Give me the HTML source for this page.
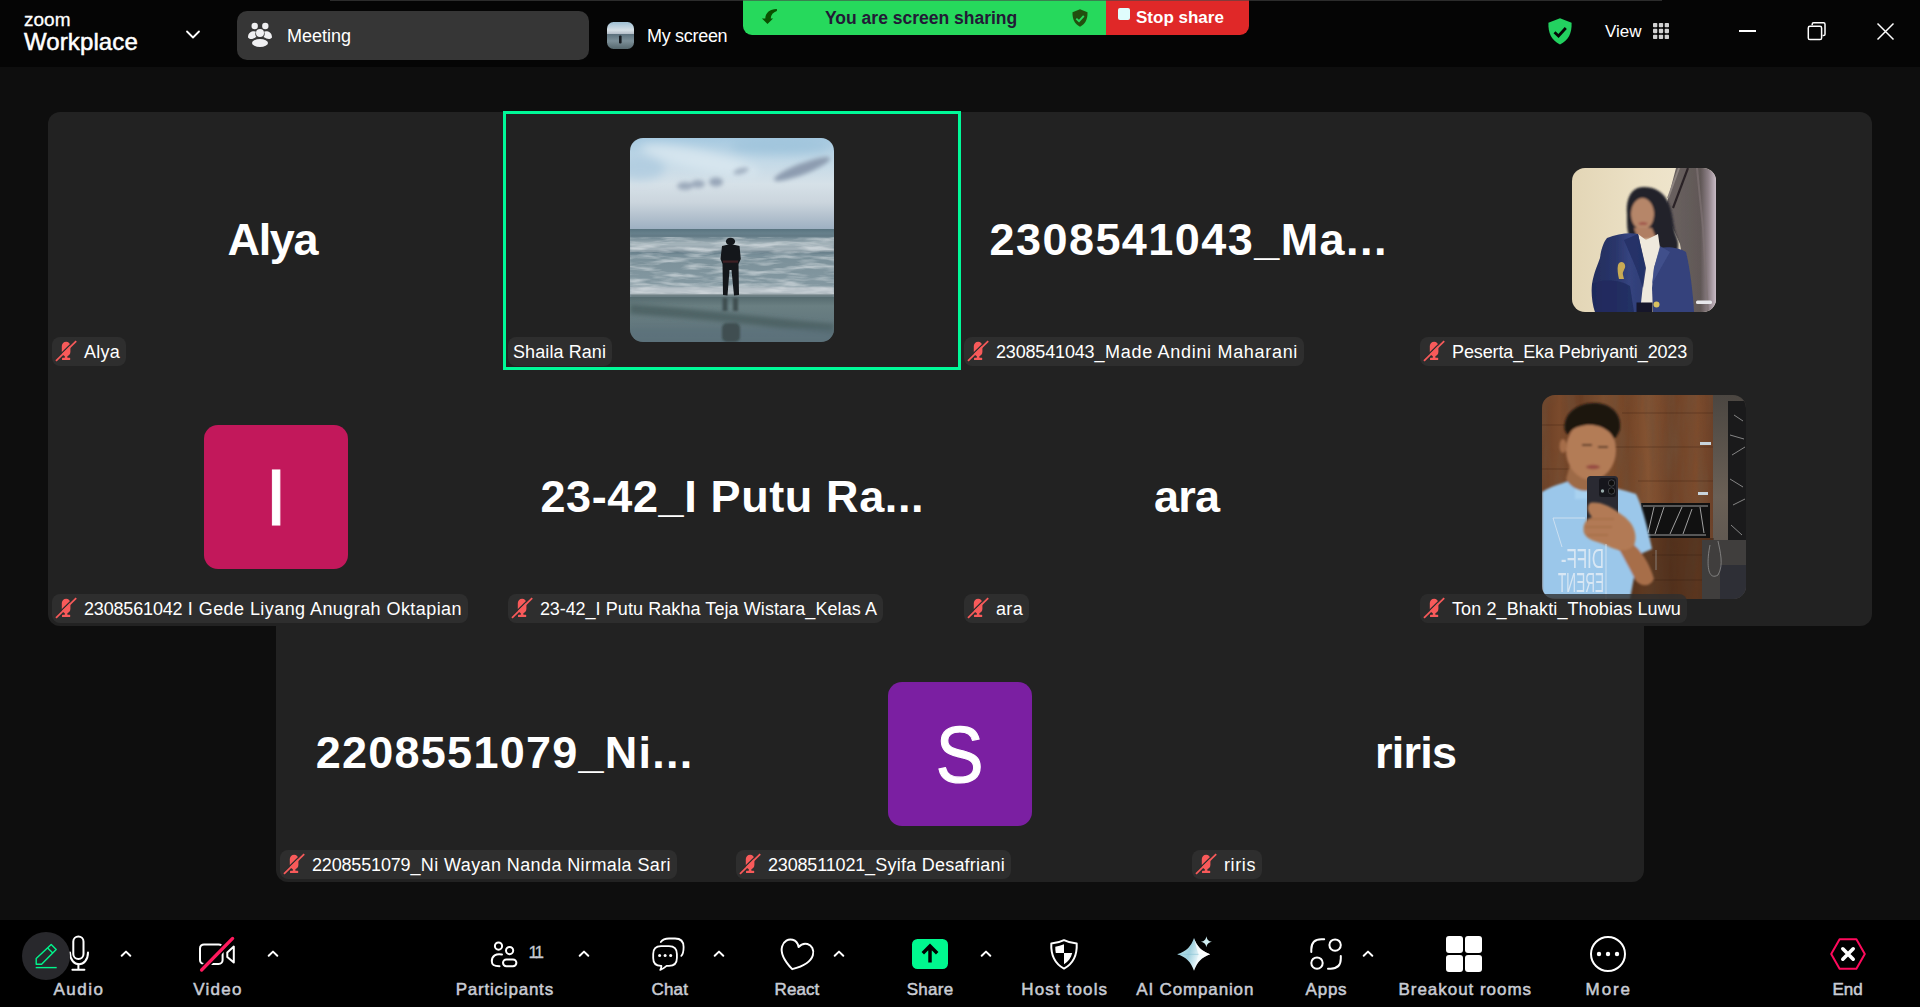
<!DOCTYPE html>
<html><head><meta charset="utf-8"><title>Zoom Meeting</title>
<style>
*{box-sizing:border-box;margin:0;padding:0}
html,body{width:1920px;height:1008px;overflow:hidden;background:#0e0e0e;font-family:"Liberation Sans",sans-serif;color:#fff}
.abs{position:absolute}
svg{position:absolute;overflow:visible}
#top{position:absolute;left:0;top:0;width:1920px;height:67px;background:#050505}
#topline{position:absolute;left:330px;top:0;width:1332px;height:1px;background:#2a2a2a}
#grid{position:absolute;left:48px;top:112px;width:1824px;height:514px;background:#222;border-radius:12px 12px 12px 12px}
#grid2{position:absolute;left:276px;top:626px;width:1368px;height:256px;background:#222;border-radius:0 0 12px 12px}
#active{position:absolute;left:503px;top:111px;width:458px;height:259px;border:3px solid #00f998}
#bar{position:absolute;left:0;top:920px;width:1920px;height:87px;background:#000}
#bline{position:absolute;left:0;top:1007px;width:1920px;height:1px;background:#fff}
.t{position:absolute;white-space:nowrap;line-height:1}
.big{position:absolute;font-weight:bold;font-size:45px;line-height:52px;height:52px;white-space:nowrap;color:#fff;text-align:center;width:456px}
.lab{position:absolute;height:29px;border-radius:8px;background:#2e2e2e;color:#fff;font-size:18px;line-height:31px;white-space:nowrap;padding:0 6px 0 32px}
.lab.nm{padding-left:5px}
.lab svg{left:3px;top:3px}
.tb{position:absolute;top:980px;font-size:17px;line-height:20px;color:#c9ccd4;white-space:nowrap;transform:translateX(-50%);-webkit-text-stroke:0.5px #c9ccd4}
.ini{position:absolute;width:144px;height:144px;border-radius:14px;text-align:center;font-size:80px;line-height:145px;color:#fff}
</style></head><body>
<div id="top"></div>
<div class="t" style="left:24px;top:9px;font-size:19px;line-height:22px;-webkit-text-stroke:0.3px #fff">zoom</div>
<div class="t" style="left:24px;top:28px;font-size:24px;line-height:28px;-webkit-text-stroke:0.5px #fff;letter-spacing:0.1px">Workplace</div>
<svg style="left:185px;top:29px" width="16" height="11" viewBox="0 0 16 11"><path d="M2 2.5 L8 8.5 L14 2.5" fill="none" stroke="#fff" stroke-width="1.8" stroke-linecap="round" stroke-linejoin="round"/></svg>
<div class="abs" style="left:237px;top:11px;width:352px;height:49px;background:#363636;border-radius:10px"></div>
<svg style="left:248px;top:22px" width="24" height="26" viewBox="0 0 24 26"><g fill="#f0f0f2"><circle cx="6.7" cy="4" r="3.2"/><circle cx="17.3" cy="4" r="3.2"/><path d="M0 15.5 C0 11 3 9.3 6 9.3 C7 9.3 7.6 9.5 8 9.8 C7 11 7 13.5 8.5 15 C5 16.5 3 18.5 0 15.5Z"/><path d="M24 15.5 C24 11 21 9.3 18 9.3 C17 9.3 16.4 9.5 16 9.8 C17 11 17 13.5 15.5 15 C19 16.5 21 18.5 24 15.5Z"/><circle cx="12" cy="11" r="4"/><ellipse cx="12" cy="21" rx="8" ry="4"/></g></svg>
<div class="t" style="left:287px;top:26px;font-size:18px;line-height:20px">Meeting</div>
<svg style="left:607px;top:22px" width="27" height="27" viewBox="0 0 27 27"><defs><clipPath id="ms"><rect width="27" height="27" rx="6.5"/></clipPath><linearGradient id="msg" x1="0" y1="0" x2="0" y2="1"><stop offset="0" stop-color="#9fc0d4"/><stop offset="0.3" stop-color="#d6e0e6"/><stop offset="0.44" stop-color="#b4bec8"/><stop offset="0.46" stop-color="#5d727e"/><stop offset="0.7" stop-color="#7c8f98"/><stop offset="1" stop-color="#56686e"/></linearGradient></defs><g clip-path="url(#ms)"><rect width="27" height="27" fill="url(#msg)"/><rect x="12" y="13.5" width="2.6" height="8" rx="1" fill="#151a1f"/></g></svg>
<div class="t" style="left:647px;top:26px;font-size:18px;line-height:20px;letter-spacing:-0.3px">My screen</div>
<div class="abs" style="left:743px;top:0px;width:363px;height:35px;background:#26d95c;border-radius:0 0 0 9px"></div>
<div class="abs" style="left:1106px;top:0px;width:143px;height:35px;background:#e02828;border-radius:0 0 9px 0"></div>
<svg style="left:761px;top:8px" width="17" height="17" viewBox="0 0 17 17"><path d="M15.900 1.100 C9.300 0.900 4.500 4.600 4.300 10.400 L0.900 10.400 L6.500 16.100 L12.100 10.400 L9.700 10.400 C9.900 7 12.200 4.300 15.900 3.100 Z" fill="#0a5000"/></svg>
<div class="t" style="left:825px;top:8px;font-size:17.5px;line-height:20px;font-weight:bold;color:#221a36">You are screen sharing</div>
<svg style="left:1072px;top:9px" width="16" height="18" viewBox="0 0 16 18"><path d="M8 0.3 L15.5 3.3 C15.7 10 13.5 15 8 17.8 C2.5 15 0.3 10 0.5 3.3Z" fill="#22500f"/><path d="M4.3 9.6 L7 12.2 L11.8 6.8" fill="none" stroke="#26d95c" stroke-width="1.9"/></svg>
<div class="abs" style="left:1118px;top:8px;width:12px;height:12px;background:#dffcfc;border-radius:2px"></div>
<div class="t" style="left:1136px;top:8px;font-size:17px;line-height:20px;font-weight:bold;color:#fff">Stop share</div>
<svg style="left:1548px;top:18px" width="24" height="27" viewBox="0 0 24 27"><path d="M12 0.2 L23.6 4.8 C24 15 20.5 22.5 12 26.6 C3.5 22.5 0 15 0.4 4.8Z" fill="#23d160"/><path d="M6.5 14.2 L10.5 18 L17.8 10" fill="none" stroke="#050505" stroke-width="2.8"/></svg>
<div class="t" style="left:1605px;top:22px;font-size:17px;line-height:20px">View</div>
<svg style="left:1653px;top:23px" width="16" height="16" viewBox="0 0 16 16"><g fill="#d2d2d2"><rect x="0" y="0" width="4.3" height="4.3" rx="0.8"/><rect x="5.85" y="0" width="4.3" height="4.3" rx="0.8"/><rect x="11.7" y="0" width="4.3" height="4.3" rx="0.8"/><rect x="0" y="5.85" width="4.3" height="4.3" rx="0.8"/><rect x="5.85" y="5.85" width="4.3" height="4.3" rx="0.8"/><rect x="11.7" y="5.85" width="4.3" height="4.3" rx="0.8"/><rect x="0" y="11.7" width="4.3" height="4.3" rx="0.8"/><rect x="5.85" y="11.7" width="4.3" height="4.3" rx="0.8"/><rect x="11.7" y="11.7" width="4.3" height="4.3" rx="0.8"/></g></svg>
<div class="abs" style="left:1739px;top:30.200px;width:17px;height:1.600px;background:#fff"></div>
<svg style="left:1806px;top:21px" width="21" height="21" viewBox="0 0 21 21"><g fill="none" stroke="#fff" stroke-width="1.5"><path d="M6.2 4.2 V3.2 Q6.2 1.8 7.6 1.8 H17.6 Q19 1.8 19 3.2 V13.2 Q19 14.6 17.6 14.6 H16.6"/><rect x="2.3" y="5.3" width="13.3" height="13.3" rx="1.6"/></g></svg>
<svg style="left:1877px;top:23px" width="17" height="17" viewBox="0 0 17 17"><path d="M0.5 0.5 L16.5 16.5 M16.5 0.5 L0.5 16.5" stroke="#fff" stroke-width="1.5" fill="none"/></svg>
<div class="abs" style="left:330px;top:0;width:1332px;height:1px;background:rgba(70,70,70,.6)"></div>

<div id="grid"></div>
<div id="grid2"></div>
<div id="active"></div>
<div class="big" style="left:45px;top:214px;letter-spacing:-1.4px;text-indent:-1.4px;">Alya</div>
<div class="lab" style="left:52px;top:337px;letter-spacing:0.25px;"><svg width="28" height="29" viewBox="0 0 28 29" style="left:0;top:0"><g fill="#f85a5a"><rect x="9.8" y="4.8" width="8.6" height="14.4" rx="4.3"/><rect x="12.8" y="18.8" width="2.6" height="2.4"/><rect x="10" y="20.8" width="8.2" height="2.3" rx="0.6"/></g><path d="M2.9 22.7 L23.1 2.9" stroke="#2e2e2e" stroke-width="1.4" fill="none"/><path d="M4 23.9 L24.2 4.1" stroke="#f85a5a" stroke-width="1.7" fill="none"/></svg>Alya</div>
<svg style="left:630px;top:138px" width="204" height="204" viewBox="0 0 204 204">
<defs>
<clipPath id="p1c"><rect width="204" height="204" rx="13"/></clipPath>
<linearGradient id="p1sky" x1="0" y1="0" x2="0" y2="1"><stop offset="0" stop-color="#a6c9e0"/><stop offset="0.25" stop-color="#c3d9e7"/><stop offset="0.5" stop-color="#d6e1e8"/><stop offset="0.7" stop-color="#cbd5dd"/><stop offset="0.86" stop-color="#b2c0cd"/><stop offset="1" stop-color="#9cafc1"/></linearGradient>
<linearGradient id="p1sea" x1="0" y1="0" x2="0" y2="1"><stop offset="0" stop-color="#58737f"/><stop offset="0.1" stop-color="#6f8892"/><stop offset="0.2" stop-color="#8ea0a8"/><stop offset="0.26" stop-color="#7d919a"/><stop offset="0.34" stop-color="#788e98"/><stop offset="0.5" stop-color="#7d929b"/><stop offset="1" stop-color="#879ba4"/></linearGradient>
<linearGradient id="p1sand" x1="0" y1="0" x2="0" y2="1"><stop offset="0" stop-color="#566b6f"/><stop offset="0.2" stop-color="#6a7f82"/><stop offset="1" stop-color="#5c717a"/></linearGradient>
<filter id="b2" x="-20%" y="-20%" width="140%" height="140%"><feGaussianBlur stdDeviation="2"/></filter>
<filter id="b1" x="-20%" y="-20%" width="140%" height="140%"><feGaussianBlur stdDeviation="0.9"/></filter>
<filter id="b4" x="-30%" y="-30%" width="160%" height="160%"><feGaussianBlur stdDeviation="5"/></filter>
<filter id="foam" x="0" y="0" width="100%" height="100%"><feTurbulence type="fractalNoise" baseFrequency="0.035 0.22" numOctaves="3" seed="7" result="n"/><feColorMatrix in="n" type="matrix" values="0 0 0 0 0.86  0 0 0 0 0.89  0 0 0 0 0.91  2.600 0 0 0 -1.050"/></filter>
</defs>
<g clip-path="url(#p1c)">
<rect width="204" height="92" fill="url(#p1sky)"/>
<g filter="url(#b4)"><ellipse cx="70" cy="22" rx="60" ry="10" fill="#dbe8f0" opacity=".8" transform="rotate(12 70 22)"/><ellipse cx="150" cy="8" rx="50" ry="8" fill="#9dc3db" opacity=".8"/><ellipse cx="10" cy="30" rx="25" ry="12" fill="#a9c9de" opacity=".7"/></g>
<g filter="url(#b2)" fill="#8d9cb0"><ellipse cx="172" cy="31" rx="30" ry="5.500" transform="rotate(-21 172 31)"/><ellipse cx="55" cy="48" rx="8" ry="4" opacity=".8"/><ellipse cx="68" cy="46" rx="7" ry="4" opacity=".8"/><ellipse cx="86" cy="44" rx="7" ry="4.500" opacity=".85"/><ellipse cx="111" cy="33" rx="8" ry="3" transform="rotate(-15 111 33)" opacity=".7"/></g>
<rect y="91" width="204" height="68" fill="url(#p1sea)"/>
<g filter="url(#b1)"><rect y="97" width="204" height="2" fill="#516a76" opacity=".7"/><rect y="104.500" width="204" height="4" fill="#aebbc2" opacity=".8"/><rect y="113" width="204" height="2.200" fill="#55707c" opacity=".85"/><rect y="109.500" width="204" height="3" fill="#c0cad0" opacity=".7"/><rect y="149" width="204" height="7.500" fill="#b9c3c9"/><rect y="156.500" width="204" height="2.500" fill="#56696d"/></g>
<rect y="99" width="204" height="57" filter="url(#foam)" opacity=".5"/>
<rect y="159" width="204" height="45" fill="url(#p1sand)"/>
<g filter="url(#b2)"><path d="M0 166 C60 170 120 178 204 186 L204 196 C120 186 60 180 0 176 Z" fill="#4b5f60" opacity=".85"/><rect y="190" width="204" height="14" fill="#5a6f79" opacity=".6"/></g>
<g fill="#14171b"><ellipse cx="100.500" cy="103.500" rx="4.600" ry="3.800"/><path d="M92 108 Q100.500 105 109.500 108 L110.800 121 L108.500 126 L109 157 L104 157.500 L101.500 132 L99.500 132 L97.500 157.500 L93 157 L92.500 126 L90.500 121 Z"/></g>
<rect x="93" y="122.500" width="15" height="2.200" fill="#3e2024"/>
<g filter="url(#b1)" fill="#3c4c4e" opacity=".9"><rect x="92.500" y="160" width="5" height="13"/><rect x="103" y="160" width="5" height="13"/><rect x="92" y="185" width="18" height="19" rx="5"/></g>
</g></svg>

<div class="lab nm" style="left:508px;top:337px;letter-spacing:0.09px;">Shaila Rani</div>
<div class="big" style="left:960px;top:214px;letter-spacing:1.44px;text-indent:1.44px;">2308541043_Ma...</div>
<div class="lab" style="left:964px;top:337px;letter-spacing:0.689px;"><svg width="28" height="29" viewBox="0 0 28 29" style="left:0;top:0"><g fill="#f85a5a"><rect x="9.8" y="4.8" width="8.6" height="14.4" rx="4.3"/><rect x="12.8" y="18.8" width="2.6" height="2.4"/><rect x="10" y="20.8" width="8.2" height="2.3" rx="0.6"/></g><path d="M2.9 22.7 L23.1 2.9" stroke="#2e2e2e" stroke-width="1.4" fill="none"/><path d="M4 23.9 L24.2 4.1" stroke="#f85a5a" stroke-width="1.7" fill="none"/></svg><span style="letter-spacing:-0.17px">2308541043</span>_Made Andini Maharani</div>
<svg style="left:1572px;top:168px" width="144" height="144" viewBox="0 0 144 144">
<defs><clipPath id="p2c"><rect width="144" height="144" rx="13"/></clipPath>
<linearGradient id="p2w" x1="0" y1="0" x2="1" y2="0"><stop offset="0" stop-color="#e3d6b6"/><stop offset="0.5" stop-color="#ece1c6"/><stop offset="1" stop-color="#f1e8d2"/></linearGradient>
<linearGradient id="p2j" x1="0" y1="0" x2="1" y2="0"><stop offset="0" stop-color="#222c5c"/><stop offset="0.45" stop-color="#2a366b"/><stop offset="0.7" stop-color="#35447f"/><stop offset="1" stop-color="#2f3d75"/></linearGradient>
<linearGradient id="p2d" x1="0" y1="0" x2="1" y2="0"><stop offset="0" stop-color="#6a6260"/><stop offset="0.7" stop-color="#615857"/><stop offset="0.85" stop-color="#8d8086"/><stop offset="1" stop-color="#c9bbc6"/></linearGradient>
<filter id="p2b" x="-20%" y="-20%" width="140%" height="140%"><feGaussianBlur stdDeviation="1.300"/></filter>
<filter id="p2b2" x="-20%" y="-20%" width="140%" height="140%"><feGaussianBlur stdDeviation="0.700"/></filter></defs>
<g clip-path="url(#p2c)">
<rect width="144" height="144" fill="url(#p2w)"/>
<g filter="url(#p2b2)">
<path d="M104 0 H144 V144 H119 L108 76 L93 42 Z" fill="url(#p2d)"/>
<path d="M116 0 L101 40" stroke="#2a2226" stroke-width="2.200" fill="none"/>
<path d="M107 0 L96 30" stroke="#8d8480" stroke-width="2" fill="none"/>
<path d="M125 0 L131 60 L136 144" stroke="#7d7274" stroke-width="2" fill="none" opacity=".7"/>
<rect x="124" y="132.500" width="16" height="3.400" rx="1.500" fill="#e6e6ea"/>
</g>
<g filter="url(#p2b)">
<path d="M72 19 C58 19 54 32 55 46 C55 56 55 62 57 68 L84 70 C86 80 90 88 98 88 C106 88 108 78 105 70 C100 58 102 44 95 32 C90 23 82 19 72 19 Z" fill="#23232c"/>
<ellipse cx="70.500" cy="46" rx="11.500" ry="16" fill="#b68669"/>
<ellipse cx="71" cy="55.500" rx="4.500" ry="1.600" fill="#9c4a45" opacity=".8"/>
<path d="M62 60 L80 60 L84 70 L66 72 Z" fill="#b07f63"/>
</g>
<g filter="url(#p2b2)">
<path d="M66 66 L74 72 L86 66 L88 80 L82 100 L80 136 L68 136 L74 100 Z" fill="#efe9dd"/>
<path d="M35 70 C45 66 58 64 66 66 L73 98 L68 144 H23 C20 136 19 124 20 116 C22 104 26 96 28 90 C29 82 31 75 35 70 Z" fill="url(#p2j)"/>
<path d="M88 80 C96 78 108 80 114 84 C118 100 121 125 122 144 H81 L80 120 L82 100 Z" fill="#34427c"/>
<path d="M66 66 L74 100 L71 120 L64 100 L52 72 Z" fill="#243066" opacity=".9"/>
<path d="M88 78 L82 100 L80 116 L90 98 L98 84 Z" fill="#43538f" opacity=".8"/>
<path d="M20 116 C30 110 50 112 58 118 L62 144 H23 Z" fill="#1f2a5c" opacity=".75"/>
<rect x="64.500" y="134.500" width="16" height="10" fill="#14152a"/>
<path d="M46 97 C47 93 52 93 53 97 C54 101 50 103 51 107 L52 111 H47 C46 107 45 101 46 97 Z" fill="#c9ab55"/>
<circle cx="84.500" cy="136.500" r="3" fill="#d9c05e"/>
</g>
</g></svg>

<div class="lab" style="left:1420px;top:337px;letter-spacing:-0.108px;"><svg width="28" height="29" viewBox="0 0 28 29" style="left:0;top:0"><g fill="#f85a5a"><rect x="9.8" y="4.8" width="8.6" height="14.4" rx="4.3"/><rect x="12.8" y="18.8" width="2.6" height="2.4"/><rect x="10" y="20.8" width="8.2" height="2.3" rx="0.6"/></g><path d="M2.9 22.7 L23.1 2.9" stroke="#2e2e2e" stroke-width="1.4" fill="none"/><path d="M4 23.9 L24.2 4.1" stroke="#f85a5a" stroke-width="1.7" fill="none"/></svg>Peserta_Eka Pebriyanti_<span style="letter-spacing:-0.17px">2023</span></div>
<div class="ini" style="left:204px;top:425px;background:#c2185b;-webkit-text-stroke:0.9px #fff">I</div>
<div class="lab" style="left:52px;top:594px;letter-spacing:0.432px;"><svg width="28" height="29" viewBox="0 0 28 29" style="left:0;top:0"><g fill="#f85a5a"><rect x="9.8" y="4.8" width="8.6" height="14.4" rx="4.3"/><rect x="12.8" y="18.8" width="2.6" height="2.4"/><rect x="10" y="20.8" width="8.2" height="2.3" rx="0.6"/></g><path d="M2.9 22.7 L23.1 2.9" stroke="#2e2e2e" stroke-width="1.4" fill="none"/><path d="M4 23.9 L24.2 4.1" stroke="#f85a5a" stroke-width="1.7" fill="none"/></svg><span style="letter-spacing:-0.17px">2308561042</span> I Gede Liyang Anugrah Oktapian</div>
<div class="big" style="left:504px;top:471px;letter-spacing:0.62px;text-indent:0.62px;">23-42_I Putu Ra...</div>
<div class="lab" style="left:508px;top:594px;letter-spacing:0.08px;"><svg width="28" height="29" viewBox="0 0 28 29" style="left:0;top:0"><g fill="#f85a5a"><rect x="9.8" y="4.8" width="8.6" height="14.4" rx="4.3"/><rect x="12.8" y="18.8" width="2.6" height="2.4"/><rect x="10" y="20.8" width="8.2" height="2.3" rx="0.6"/></g><path d="M2.9 22.7 L23.1 2.9" stroke="#2e2e2e" stroke-width="1.4" fill="none"/><path d="M4 23.9 L24.2 4.1" stroke="#f85a5a" stroke-width="1.7" fill="none"/></svg><span style="letter-spacing:-0.17px">23</span>-<span style="letter-spacing:-0.17px">42</span>_I Putu Rakha Teja Wistara_Kelas A</div>
<div class="big" style="left:959px;top:471px;letter-spacing:-0.8px;text-indent:-0.8px;">ara</div>
<div class="lab" style="left:964px;top:594px;letter-spacing:0.33px;"><svg width="28" height="29" viewBox="0 0 28 29" style="left:0;top:0"><g fill="#f85a5a"><rect x="9.8" y="4.8" width="8.6" height="14.4" rx="4.3"/><rect x="12.8" y="18.8" width="2.6" height="2.4"/><rect x="10" y="20.8" width="8.2" height="2.3" rx="0.6"/></g><path d="M2.9 22.7 L23.1 2.9" stroke="#2e2e2e" stroke-width="1.4" fill="none"/><path d="M4 23.9 L24.2 4.1" stroke="#f85a5a" stroke-width="1.7" fill="none"/></svg>ara</div>
<svg style="left:1542px;top:395px" width="204" height="204" viewBox="0 0 204 204">
<defs><clipPath id="p3c"><rect width="204" height="204" rx="13"/></clipPath>
<linearGradient id="p3w" x1="0" y1="0" x2="1" y2="0"><stop offset="0" stop-color="#6b3f25"/><stop offset="0.1" stop-color="#7a4a2c"/><stop offset="0.22" stop-color="#6a3e24"/><stop offset="0.36" stop-color="#80502f"/><stop offset="0.5" stop-color="#744527"/><stop offset="0.62" stop-color="#855433"/><stop offset="0.75" stop-color="#6f4227"/><stop offset="0.9" stop-color="#7d4c2d"/><stop offset="1" stop-color="#6a4028"/></linearGradient>
<linearGradient id="p3g" x1="0" y1="0" x2="0" y2="1"><stop offset="0" stop-color="#4b4641"/><stop offset="0.5" stop-color="#6a6056"/><stop offset="1" stop-color="#55504c"/></linearGradient>
<filter id="p3b" x="-20%" y="-20%" width="140%" height="140%"><feGaussianBlur stdDeviation="1.200"/></filter>
<filter id="p3b2" x="-20%" y="-20%" width="140%" height="140%"><feGaussianBlur stdDeviation="0.600"/></filter><filter id="wood" x="0" y="0" width="100%" height="100%"><feTurbulence type="fractalNoise" baseFrequency="0.09 0.012" numOctaves="3" seed="11" result="n"/><feColorMatrix in="n" type="matrix" values="0 0 0 0 0.16  0 0 0 0 0.08  0 0 0 0 0.04  1.900 0 0 0 -0.700"/></filter>
</defs>
<g clip-path="url(#p3c)">
<rect width="172" height="204" fill="url(#p3w)"/>
<rect width="172" height="204" filter="url(#wood)" opacity=".75"/>
<g stroke="#3f2414" stroke-width="0.700" opacity=".55"><path d="M0 30 H60 M70 52 H172 M0 74 H40 M96 86 H172 M110 160 H160 M100 185 H160 M80 18 H172"/></g>
<rect x="171" width="33" height="204" fill="url(#p3g)"/>
<rect x="186" y="6" width="18" height="164" fill="#1a1a1b"/>
<rect x="88" y="143" width="84" height="61" fill="#1e0f06" opacity=".35"/>
<rect x="160" y="145" width="44" height="59" fill="#403e3d"/>
<rect x="178" y="170" width="26" height="34" fill="#2e2f36"/>
<g stroke="#cfcfcf" stroke-width="0.800" fill="none" opacity=".75"><path d="M188 40 L202 44 M190 60 L203 52 M188 84 L201 92 M191 110 L203 104 M189 130 L200 140 M192 20 L201 26"/></g>
<rect x="99" y="108" width="69" height="35" fill="#111"/>
<g stroke="#d8d8d8" stroke-width="0.900" fill="none" opacity=".8"><path d="M112 112 L106 138 M122 112 L113 139 M140 112 L128 139 M150 114 L141 139 M158 112 L162 138 M101 111 H166 M104 140 H164"/></g>
<g fill="#c8d4dc"><rect x="158" y="47" width="11" height="3"/><rect x="156" y="97" width="10" height="3"/></g>
<g filter="url(#p3b)">
<path d="M21 88 C30 84 50 84 58 88 C70 92 84 96 94 99 C100 110 106 135 110 154 L96 160 L88 204 H0 V97 C6 93 14 90 21 88 Z" fill="#9bc7ea"/>
<path d="M33 92 H56 V104 H33 Z" fill="#a9d2f0"/>
<path d="M24 84 C28 92 36 96 44 96 C52 96 58 92 60 86 L57 70 H28 Z" fill="#9d6a47"/>
<ellipse cx="49" cy="55" rx="25" ry="30" fill="#b37b56"/>
<ellipse cx="21" cy="51" rx="3.500" ry="7" fill="#a56d4a"/>
<path d="M23 36 C20 20 34 8 52 8 C68 8 80 18 78 34 C76 40 74 42 72 44 C68 34 56 29 44 30 C36 31 28 34 26 40 Z" fill="#1b1411"/>
<ellipse cx="51" cy="72" rx="7" ry="2.200" fill="#8f3f3c" opacity=".75"/>
<path d="M40 50 H50 M56 52 H66" stroke="#3a2418" stroke-width="2" opacity=".7"/>
<path d="M86 146 C96 150 108 168 112 184 C108 192 100 192 94 186 C88 174 80 160 76 152 Z" fill="#a76e4a"/>
</g>
<g filter="url(#p3b2)">
<rect x="45" y="81" width="31" height="60" rx="3.500" fill="#2a2c32"/>
<rect x="57" y="83" width="17" height="19" rx="2.500" fill="#17181c"/>
<circle cx="69.500" cy="88" r="3.200" fill="#0c0c0e" stroke="#4a4c52" stroke-width="0.800"/><circle cx="69.500" cy="96" r="3.200" fill="#0c0c0e" stroke="#4a4c52" stroke-width="0.800"/><circle cx="60.500" cy="96" r="1.700" fill="#9aa"/>
</g>
<g filter="url(#p3b)">
<path d="M48 108 C58 106 70 112 80 120 C92 128 96 140 92 150 C86 158 74 156 64 150 C54 146 46 146 42 138 C40 130 44 124 50 122 C46 118 44 112 48 108 Z" fill="#b27a54"/>
<path d="M44 124 H72 M43 132 H70 M46 140 H66" stroke="#8d5a3b" stroke-width="1.200" opacity=".6"/>
</g>
<g fill="none" stroke="#dfeaf3" stroke-width="1" opacity=".7"><path d="M11 123 H43 M11 123 L20 152 M64 149 V204"/></g>
<g font-family="Liberation Sans, sans-serif" font-size="27" fill="#e9f0f7" opacity=".78" transform="translate(62 0) scale(-1 1)"><text x="0" y="172.500" textLength="43" lengthAdjust="spacingAndGlyphs">DIFF-</text><text x="0" y="197" textLength="46" lengthAdjust="spacingAndGlyphs">ERENT</text></g>
<g stroke="#9a9a9a" stroke-width="1" fill="none" opacity=".7"><path d="M114 155 V175 M168 150 C164 170 166 186 176 180 C182 170 178 156 176 146"/></g>
</g></svg>

<div class="lab" style="left:1420px;top:594px;letter-spacing:0.11px;background:rgba(46,46,46,.8);"><svg width="28" height="29" viewBox="0 0 28 29" style="left:0;top:0"><g fill="#f85a5a"><rect x="9.8" y="4.8" width="8.6" height="14.4" rx="4.3"/><rect x="12.8" y="18.8" width="2.6" height="2.4"/><rect x="10" y="20.8" width="8.2" height="2.3" rx="0.6"/></g><path d="M2.9 22.7 L23.1 2.9" stroke="#2e2e2e" stroke-width="1.4" fill="none"/><path d="M4 23.9 L24.2 4.1" stroke="#f85a5a" stroke-width="1.7" fill="none"/></svg>Ton 2_Bhakti_Thobias Luwu</div>
<div class="big" style="left:276px;top:727px;letter-spacing:1.24px;text-indent:1.24px;">2208551079_Ni...</div>
<div class="lab" style="left:280px;top:850px;letter-spacing:0.398px;"><svg width="28" height="29" viewBox="0 0 28 29" style="left:0;top:0"><g fill="#f85a5a"><rect x="9.8" y="4.8" width="8.6" height="14.4" rx="4.3"/><rect x="12.8" y="18.8" width="2.6" height="2.4"/><rect x="10" y="20.8" width="8.2" height="2.3" rx="0.6"/></g><path d="M2.9 22.7 L23.1 2.9" stroke="#2e2e2e" stroke-width="1.4" fill="none"/><path d="M4 23.9 L24.2 4.1" stroke="#f85a5a" stroke-width="1.7" fill="none"/></svg><span style="letter-spacing:-0.17px">2208551079</span>_Ni Wayan Nanda Nirmala Sari</div>
<div class="ini" style="left:888px;top:682px;background:#7b1fa2;font-size:77px;-webkit-text-stroke:1.1px #fff"><span style="display:inline-block;transform:scale(.93,1.04)">S</span></div>
<div class="lab" style="left:736px;top:850px;letter-spacing:0.227px;"><svg width="28" height="29" viewBox="0 0 28 29" style="left:0;top:0"><g fill="#f85a5a"><rect x="9.8" y="4.8" width="8.6" height="14.4" rx="4.3"/><rect x="12.8" y="18.8" width="2.6" height="2.4"/><rect x="10" y="20.8" width="8.2" height="2.3" rx="0.6"/></g><path d="M2.9 22.7 L23.1 2.9" stroke="#2e2e2e" stroke-width="1.4" fill="none"/><path d="M4 23.9 L24.2 4.1" stroke="#f85a5a" stroke-width="1.7" fill="none"/></svg><span style="letter-spacing:-0.17px">2308511021</span>_Syifa Desafriani</div>
<div class="big" style="left:1188px;top:727px;letter-spacing:-0.8px;text-indent:-0.8px;">riris</div>
<div class="lab" style="left:1192px;top:850px;letter-spacing:0.6px;"><svg width="28" height="29" viewBox="0 0 28 29" style="left:0;top:0"><g fill="#f85a5a"><rect x="9.8" y="4.8" width="8.6" height="14.4" rx="4.3"/><rect x="12.8" y="18.8" width="2.6" height="2.4"/><rect x="10" y="20.8" width="8.2" height="2.3" rx="0.6"/></g><path d="M2.9 22.7 L23.1 2.9" stroke="#2e2e2e" stroke-width="1.4" fill="none"/><path d="M4 23.9 L24.2 4.1" stroke="#f85a5a" stroke-width="1.7" fill="none"/></svg>riris</div>

<div id="bar"></div><div id="bline"></div>
<svg style="left:0;top:920px" width="1920" height="87" viewBox="0 920 1920 87">
<g fill="none" stroke="#fff" stroke-width="2" stroke-linecap="round" stroke-linejoin="round">
<!-- mic -->
<rect x="73.3" y="936.4" width="10.2" height="22.6" rx="5.1"/><path d="M70 952.5 C70 968 88 968 88 952.5"/><path d="M78.4 964.3 V969.8 M72.4 969.8 H84.4"/>
<!-- chevrons -->
<path d="M121.7 955.8 L126 951.6 L130.3 955.8"/><path d="M268.7 955.8 L273 951.6 L277.3 955.8"/><path d="M579.7 955.8 L584 951.6 L588.3 955.8"/><path d="M714.7 955.8 L719 951.6 L723.3 955.8"/><path d="M834.7 955.8 L839 951.6 L843.3 955.8"/><path d="M981.7 955.8 L986 951.6 L990.3 955.8"/><path d="M1363.7 955.8 L1368 951.6 L1372.300 955.8"/>
<!-- camera -->
<rect x="200" y="944.4" width="22.6" height="19.6" rx="4"/><path d="M227.3 952.4 L233.8 946.6 V962.6 L227.3 957 Z"/>
<!-- participants -->
<circle cx="498.5" cy="946.1" r="3.6"/><circle cx="509.6" cy="950.6" r="3.6"/><path d="M502 954.6 C496 953.3 491.800 956 491.800 961 C491.800 964.8 493.500 966.200 499.500 966.200"/><rect x="503" y="959.4" width="13.4" height="6.800" rx="3.4"/>
</g>
<circle cx="46" cy="956" r="24" fill="#28282c"/>
<g fill="none" stroke="#00f58c" stroke-width="1.4" stroke-linejoin="round"><path d="M36.2 964.3 V958.6 L51.2 944.6 L56.2 949.6 L41.6 964.3 Z"/><path d="M47.6 948 L52.8 953.1"/><path d="M35.7 967.6 H56.7"/></g>
<path d="M201.600 970 L232.600 938.400" stroke="#000" stroke-width="6.500" stroke-linecap="round" fill="none"/>
<path d="M201.600 970 L232.600 938.400" stroke="#ff1a5e" stroke-width="3.300" stroke-linecap="round" fill="none"/>
<g fill="none" stroke="#fff" stroke-width="1.800" stroke-linecap="round" stroke-linejoin="round">
<!-- chat -->
<path d="M661 946.100 H669 C674.500 946.100 676.900 948.500 676.900 954 V958 C676.900 963.500 674.500 965.900 669 965.900 H666.500 C664 968 662.500 969.300 660.300 969.900 C661 968.500 661.400 967.500 661.400 965.900 H661 C655.500 965.900 653.200 963.500 653.200 958 V954 C653.200 948.500 655.500 946.100 661 946.100 Z"/>
<path d="M660.800 942 C662.500 939.500 665 938.500 669 938.500 H675 C681 938.500 683.600 941 683.600 947 C683.600 951.500 683.300 954 681.300 955.900"/>
<!-- heart -->
<path stroke-width="2.100" transform="translate(796.400 954.600) rotate(16) scale(0.93)" d="M0 16.300 C-9 11 -17.200 4.500 -17.200 -4.200 C-17.200 -10.300 -13 -14.200 -8.300 -14.200 C-4.600 -14.200 -1.700 -12 0 -8.500 C1.700 -12 4.600 -14.200 8.300 -14.200 C13 -14.200 17.200 -10.300 17.200 -4.200 C17.200 4.500 9 11 0 16.300 Z"/>
</g>
<g fill="#fff"><circle cx="659.600" cy="955.600" r="1.500"/><circle cx="665.100" cy="955.600" r="1.500"/><circle cx="670.700" cy="955.600" r="1.500"/></g>
<!-- share -->
<rect x="912" y="939" width="36" height="30" rx="5.500" fill="#00f88f"/>
<path d="M930 962.600 V946.500 M922.800 953.200 L930 946 L937.200 953.200" fill="none" stroke="#000" stroke-width="3.500" stroke-linejoin="miter"/>
<!-- host tools -->
<path d="M1064 940.200 C1060 942.200 1055.500 943.300 1051.300 943.600 C1050.800 955 1054.500 963.500 1064 968.600 C1073.500 963.500 1077.200 955 1076.700 943.600 C1072.500 943.300 1068 942.200 1064 940.200 Z" fill="none" stroke="#fff" stroke-width="2" stroke-linejoin="round"/>
<path d="M1064 944.300 C1061 945.500 1058.200 946.300 1055.300 946.700 C1055.200 949 1055.400 951 1055.800 953 H1064 Z M1064 953 H1072.200 C1071 957.800 1068.500 961.500 1064 964.300 Z" fill="#fff"/>
<!-- AI companion -->
<defs><linearGradient id="aig" x1="0" y1="0" x2="1" y2="0.300"><stop offset="0" stop-color="#bfe6ee"/><stop offset="0.450" stop-color="#9fd0de"/><stop offset="0.750" stop-color="#e8f6fa"/><stop offset="1" stop-color="#ffffff"/></linearGradient></defs>
<path d="M1194 938.100 C1197 946.500 1201.500 951.300 1210.200 954.300 C1201.500 957.400 1197 962.200 1194 970.700 C1191 962.200 1186.500 957.400 1177.600 954.300 C1186.500 951.300 1191 946.500 1194 938.100 Z" fill="url(#aig)"/><path d="M1194 938.100 C1197 946.500 1201.500 951.300 1210.200 954.300 L1198.500 954.300 C1197 950 1196 946 1194 938.100 Z" fill="#fff" opacity=".75"/><path d="M1210.200 954.300 C1201.500 957.400 1197 962.200 1194 970.700 C1195.500 964 1197 959 1198.500 954.300 Z" fill="#fff" opacity=".45"/><path d="M1177.600 954.300 H1198.500" stroke="#8cc4d4" stroke-width="0.800" opacity=".8"/>
<path d="M1206.400 936.200 C1207.100 939.800 1208.400 941.100 1212 941.700 C1208.400 942.400 1207.100 943.700 1206.400 947.300 C1205.700 943.700 1204.400 942.400 1200.800 941.700 C1204.400 941.100 1205.700 939.800 1206.400 936.200 Z" fill="#cfeef2"/>
<!-- apps -->
<g fill="none" stroke="#fff" stroke-width="2" stroke-linecap="round"><circle cx="1335.100" cy="945.100" r="5.700"/><circle cx="1317" cy="963.100" r="5.700"/><path d="M1311.300 952 V949.500 C1311.300 942.500 1314.500 939.300 1321.500 939.300 H1324.200"/><path d="M1340.800 956 V958.500 C1340.800 965.500 1337.600 968.700 1330.600 968.700 H1328"/></g>
<!-- breakout -->
<g fill="#fff"><rect x="1446" y="936" width="17" height="17" rx="3"/><rect x="1465" y="936" width="17" height="17" rx="3"/><rect x="1446" y="955" width="17" height="17" rx="3"/><rect x="1465" y="955" width="17" height="17" rx="3"/></g>
<!-- more -->
<circle cx="1608" cy="954" r="17" fill="none" stroke="#fff" stroke-width="2"/><g fill="#fff"><circle cx="1599" cy="954" r="2.200"/><circle cx="1608" cy="954" r="2.200"/><circle cx="1617" cy="954" r="2.200"/></g>
<!-- end -->
<path d="M1831.200 954 L1839.600 939.200 H1856.400 L1864.800 954 L1856.400 968.800 H1839.600 Z" fill="none" stroke="#ff0a5c" stroke-width="2" stroke-linejoin="round"/>
<path d="M1842.800 948.800 L1853.200 959.200 M1853.200 948.800 L1842.800 959.200" stroke="#fff" stroke-width="3.600" stroke-linecap="round" fill="none"/>
</svg>
<div class="t" style="left:528.500px;top:943px;font-size:17px;line-height:20px;color:#c6c9d1;-webkit-text-stroke:0.3px #c6c9d1;letter-spacing:-2.300px">11</div>
<div class="tb" style="left:78.2px;letter-spacing:1.53px;text-indent:1.53px">Audio</div>
<div class="tb" style="left:217.4px;letter-spacing:1.25px;text-indent:1.25px">Video</div>
<div class="tb" style="left:504.4px;letter-spacing:0.79px;text-indent:0.79px">Participants</div>
<div class="tb" style="left:669.7px;letter-spacing:0.2px;text-indent:0.2px">Chat</div>
<div class="tb" style="left:796.9px;letter-spacing:0.07px;text-indent:0.07px">React</div>
<div class="tb" style="left:930.0px;letter-spacing:0.28px;text-indent:0.28px">Share</div>
<div class="tb" style="left:1064.2px;letter-spacing:1.14px;text-indent:1.14px">Host tools</div>
<div class="tb" style="left:1194.8px;letter-spacing:0.86px;text-indent:0.86px">AI Companion</div>
<div class="tb" style="left:1326.1px;letter-spacing:0.77px;text-indent:0.77px">Apps</div>
<div class="tb" style="left:1464.8px;letter-spacing:0.97px;text-indent:0.97px">Breakout rooms</div>
<div class="tb" style="left:1607.8px;letter-spacing:1.9px;text-indent:1.9px">More</div>
<div class="tb" style="left:1847.5px;letter-spacing:0.0px;text-indent:0.0px">End</div>

</body></html>
